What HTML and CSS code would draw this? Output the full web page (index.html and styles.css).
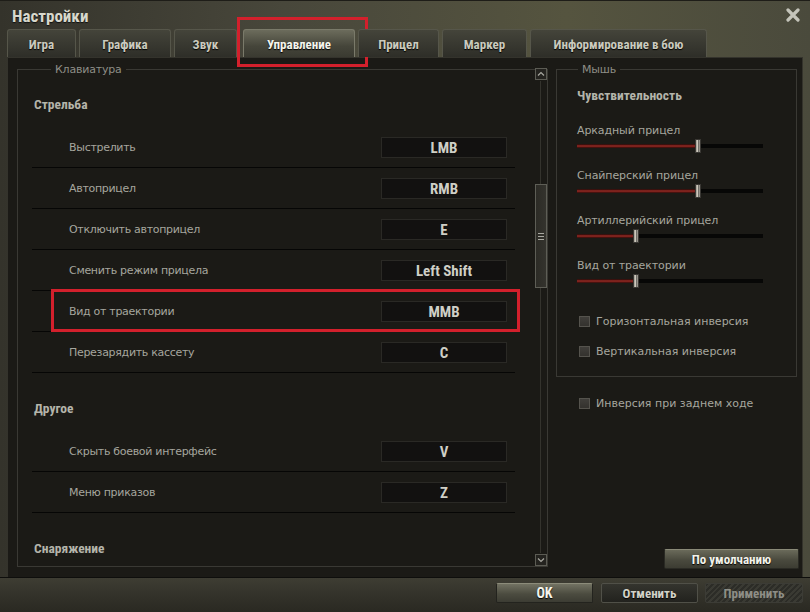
FILE: index.html
```html
<!DOCTYPE html>
<html lang="ru">
<head>
<meta charset="utf-8">
<title>Настройки</title>
<link rel="stylesheet" href="styles.css">
</head>
<body>
<div class="window">
  <header class="titlebar">
    <span class="title">Настройки</span>
    <svg class="close" width="14" height="14" viewBox="0 0 14 14"><path d="M2 2 L12 12 M12 2 L2 12" stroke="#c4c4ba" stroke-width="3.2" stroke-linecap="round"/></svg>
  </header>
  <nav class="tabs">
    <div class="tab tab-game">Игра</div>
    <div class="tab tab-gfx">Графика</div>
    <div class="tab tab-snd">Звук</div>
    <div class="tab tab-ctrl active">Управление<span class="mark"></span></div>
    <div class="tab tab-aim">Прицел</div>
    <div class="tab tab-mark">Маркер</div>
    <div class="tab tab-info">Информирование в бою</div>
  </nav>
  <main class="content">
    <fieldset class="kbd">
      <legend>Клавиатура</legend>
      <div class="kbd-list">
        <section class="group first">
          <h3>Стрельба</h3>
          <div class="row"><span class="lbl">Выстрелить</span><span class="key">LMB</span></div>
          <div class="row"><span class="lbl">Автоприцел</span><span class="key">RMB</span></div>
          <div class="row"><span class="lbl">Отключить автоприцел</span><span class="key">E</span></div>
          <div class="row"><span class="lbl">Сменить режим прицела</span><span class="key">Left Shift</span></div>
          <div class="row marked"><span class="lbl">Вид от траектории</span><span class="key">MMB</span><span class="mark"></span></div>
          <div class="row"><span class="lbl">Перезарядить кассету</span><span class="key">C</span></div>
        </section>
        <section class="group">
          <h3>Другое</h3>
          <div class="row"><span class="lbl">Скрыть боевой интерфейс</span><span class="key">V</span></div>
          <div class="row"><span class="lbl">Меню приказов</span><span class="key">Z</span></div>
        </section>
        <section class="group">
          <h3>Снаряжение</h3>
        </section>
      </div>
      <div class="scrollbar">
        <div class="sb-btn"><svg width="8" height="6" viewBox="0 0 8 6"><path d="M1 4.5 L4 1.5 L7 4.5" fill="none" stroke="#a8a8a0" stroke-width="1.2"/></svg></div>
        <div class="sb-track">
          <div class="sb-thumb"><span class="grip"></span><span class="grip"></span><span class="grip"></span></div>
        </div>
        <div class="sb-btn"><svg width="8" height="6" viewBox="0 0 8 6"><path d="M1 1.5 L4 4.5 L7 1.5" fill="none" stroke="#a8a8a0" stroke-width="1.2"/></svg></div>
      </div>
    </fieldset>
    <div class="side">
      <fieldset class="mouse">
        <legend>Мышь</legend>
        <h4>Чувствительность</h4>
        <div class="sgroup">
          <div class="slabel">Аркадный прицел</div>
          <div class="slider"><span class="fill" style="width:118px"></span><span class="thumb"></span><span class="rest"></span></div>
        </div>
        <div class="sgroup">
          <div class="slabel">Снайперский прицел</div>
          <div class="slider"><span class="fill" style="width:118px"></span><span class="thumb"></span><span class="rest"></span></div>
        </div>
        <div class="sgroup">
          <div class="slabel">Артиллерийский прицел</div>
          <div class="slider"><span class="fill" style="width:56px"></span><span class="thumb"></span><span class="rest"></span></div>
        </div>
        <div class="sgroup">
          <div class="slabel">Вид от траектории</div>
          <div class="slider"><span class="fill" style="width:56px"></span><span class="thumb"></span><span class="rest"></span></div>
        </div>
        <div class="check first-check"><span class="box"></span>Горизонтальная инверсия</div>
        <div class="check"><span class="box"></span>Вертикальная инверсия</div>
      </fieldset>
      <div class="check outside"><span class="box"></span>Инверсия при заднем ходе</div>
      <button class="btn btn-default">По умолчанию</button>
    </div>
  </main>
  <footer class="footer">
    <button class="btn btn-ok">OK</button>
    <button class="btn btn-cancel">Отменить</button>
    <button class="btn btn-apply">Применить</button>
  </footer>
</div>
</body>
</html>
```

FILE: styles.css
```css
* { box-sizing: border-box; }
html, body { margin: 0; padding: 0; }
body {
  width: 810px;
  height: 612px;
  overflow: hidden;
  background: #1a1915;
  font-family: "DejaVu Sans", sans-serif;
}
.window {
  width: 810px;
  height: 612px;
  display: flex;
  flex-direction: column;
  background: linear-gradient(to right, #34332b 0%, #48473b 35%, #55543f 70%, #4a4a3c 100%);
}
.title, .tab, h3, h4, .key, .btn {
  font-family: "Roboto Condensed", "Roboto", "DejaVu Sans Condensed", sans-serif;
  font-stretch: condensed;
  font-weight: bold;
}
.titlebar {
  height: 29px;
  display: flex;
  align-items: center;
  justify-content: space-between;
  padding: 2px 10px 0 12px;
  border-top: 1px solid #1e1d18;
}
.title {
  font-size: 17px;
  color: #d8d8cc;
  text-shadow: 0 1px 1px #111;
}
.close { display: block; margin-top: -2px; }

.tabs {
  height: 28px;
  display: flex;
  align-items: stretch;
  gap: 3px;
  padding-left: 7px;
}
.tab {
  position: relative;
  display: flex;
  align-items: center;
  justify-content: center;
  padding-top: 2px;
  font-size: 13px;
  color: #cacabe;
  border: 1px solid #56564a;
  border-bottom: none;
  border-radius: 3px 3px 0 0;
  background: linear-gradient(#44443a, #2e2e28);
  text-shadow: 0 1px 1px #000;
}
.tab-game { width: 69px; }
.tab-gfx { width: 92px; }
.tab-snd { width: 63px; }
.tab-ctrl { width: 112px; margin-left: 3px; }
.tab-aim { width: 81px; }
.tab-mark { width: 85px; }
.tab-info { width: 177px; }
.tab.active {
  color: #f4f4ec;
  background: linear-gradient(#6c6c5c, #45453a 60%, #3a3a31);
  border-color: #7a7a6a;
}
.tab .mark {
  position: absolute;
  left: -7px;
  top: -13px;
  width: 131px;
  height: 50px;
  border: 3px solid #d3202c;
  pointer-events: none;
}

.content {
  flex: 1;
  margin: 0 7px;
  background: #1b1a16;
  border: 1px solid #34332c;
  border-bottom: none;
  display: flex;
  padding: 5px 3px 8px 9px;
  gap: 8px;
  min-height: 0;
}
fieldset {
  margin: 0;
  border: 1px solid #3a3934;
  min-width: 0;
}
legend {
  font-size: 11px;
  line-height: 13px;
  color: #8e8e86;
  padding: 0 4px;
  margin-left: 19px;
  letter-spacing: -0.2px;
}
.kbd {
  width: 531px;
  margin-bottom: 2px;
  padding: 0 0 0 14px;
  display: flex;
}
.kbd-list {
  flex: 1;
  overflow: hidden;
  padding-right: 19px;
}
.group h3 {
  margin: 0;
  font-size: 13.5px;
  line-height: 18px;
  color: #b4b4aa;
  padding: 26px 0 14px 2px;
}
.group.first h3 { padding-top: 19px; }
.row {
  position: relative;
  height: 41px;
  border-bottom: 1px solid #060605;
  display: flex;
  align-items: center;
  justify-content: space-between;
  padding: 0 8px 0 37px;
}
.lbl {
  font-size: 11px;
  color: #a6a69e;
  letter-spacing: -0.3px;
}
.key {
  width: 126px;
  height: 21px;
  background: #121110;
  border: 1px solid #2a2925;
  display: flex;
  align-items: center;
  justify-content: center;
  font-size: 15px;
  color: #cfcfc6;
  margin-top: 1px;
}
.row .mark {
  position: absolute;
  left: 19px;
  right: -5px;
  top: -2px;
  bottom: -1px;
  border: 3px solid #d3202c;
  pointer-events: none;
}

.scrollbar {
  width: 13px;
  margin-top: -8px;
  display: flex;
  flex-direction: column;
  align-items: center;
}
.sb-btn {
  width: 12px;
  height: 12px;
  border: 1px solid #5c5c54;
  background: #24231f;
  display: flex;
  align-items: center;
  justify-content: center;
}
.sb-track {
  flex: 1;
  width: 12px;
  margin: 1px 0;
  background: linear-gradient(to right, transparent 5px, #34332d 5px, #34332d 6px, transparent 6px);
  padding-top: 103px;
}
.sb-thumb {
  width: 12px;
  height: 104px;
  border: 1px solid #5e5e56;
  background: linear-gradient(to right, #2c2b26, #34332d);
  display: flex;
  flex-direction: column;
  align-items: center;
  justify-content: center;
  gap: 2px;
}
.grip { width: 6px; height: 1px; background: #a8a8a0; }

.side {
  flex: 1;
  display: flex;
  flex-direction: column;
  align-items: stretch;
}
.mouse {
  margin-right: 2px;
  padding: 0 0 17px 20px;
}
.mouse legend { margin-left: 1px; }
.mouse h4 {
  margin: 0;
  font-size: 13.5px;
  line-height: 16px;
  color: #b4b4aa;
  padding: 11px 0 19px;
}
.sgroup { margin-bottom: 15px; }
.slabel {
  font-size: 11px;
  line-height: 16px;
  color: #a6a69e;
  letter-spacing: -0.1px;
  padding-top: 1px;
}
.slider {
  width: 186px;
  height: 12px;
  margin-top: 1px;
  display: flex;
  align-items: center;
}
.fill {
  height: 4px;
  background: linear-gradient(#1a0806, #9a2a24 50%, #2a0a08);
}
.thumb {
  width: 6px;
  height: 14px;
  flex: none;
  border: 1px solid #3a3834;
  background: linear-gradient(to right, #9a968c, #d0ccc0 40%, #6c6a64 60%, #a8a49a);
}
.rest {
  flex: 1;
  height: 4px;
  background: #070706;
}
.check {
  display: flex;
  align-items: center;
  height: 16px;
  font-size: 11px;
  color: #a6a69e;
  padding-left: 2px;
  margin-bottom: 14px;
}
.check:last-child { margin-bottom: 0; }
.check.first-check { margin-top: 26px; }
.box {
  width: 11px;
  height: 11px;
  border: 1px solid #55534d;
  background: linear-gradient(#403e3a, #34322e);
  margin-right: 6px;
}
.check.outside {
  margin-top: 18px;
  padding-left: 23px;
}

.btn {
  height: 20px;
  border-radius: 2px;
  padding: 0;
  font-size: 13px;
  display: flex;
  align-items: center;
  justify-content: center;
  cursor: default;
}
.btn-default {
  margin-top: auto;
  margin-left: auto;
  width: 135px;
  color: #f2f2ea;
  border: 1px solid #2a2a24;
  border-top-color: #8a8a78;
  background: linear-gradient(#6a6a5a, #4a4a3e 55%, #3c3c32);
  text-shadow: 0 1px 1px #000;
}
.footer {
  height: 35px;
  display: flex;
  justify-content: flex-end;
  align-items: flex-start;
  padding: 5px 7px 0 0;
  gap: 8px;
  border-top: 1px solid #0e0e0c;
  background: linear-gradient(#3e3d33, #33322a 50%, #2a2922);
}
.btn-ok {
  width: 97px;
  font-size: 14px;
  color: #f4f4ec;
  border: 1px solid #23231e;
  border-top-color: #8c8c7a;
  background: linear-gradient(#727262, #4c4c40 55%, #3c3c33);
  text-shadow: 0 1px 1px #000;
}
.btn-cancel {
  width: 97px;
  color: #d2d2c8;
  border: 1px solid #505048;
  background: linear-gradient(#34342e, #22221e);
  text-shadow: 0 1px 1px #000;
}
.btn-apply {
  width: 98px;
  margin-left: -1px;
  color: #8e8e86;
  border: 1px solid #3c3c36;
  background: repeating-linear-gradient(135deg, #2c2c27 0 2px, #3a3a33 2px 4px);
}
```
